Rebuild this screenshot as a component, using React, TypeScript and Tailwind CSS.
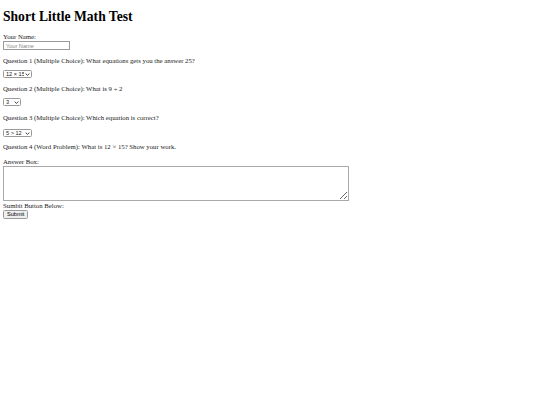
import React, { useState } from 'react';

const serif = 'font-["Liberation_Serif","Times_New_Roman",serif]';
const sans = 'font-["Liberation_Sans",Arial,sans-serif]';

function Chevron() {
  return (
    <svg viewBox="0 0 8 5" className="w-[5px] h-[3px]" fill="none" stroke="#333" strokeWidth="1.6">
      <path d="M1 1l3 3 3-3" />
    </svg>
  );
}

function TinySelect({ options, width }: { options: string[]; width: string }) {
  const [value, setValue] = useState(options[0]);
  return (
    <div className={`relative h-[8px] ${width}`}>
      <select
        value={value}
        onChange={(e) => setValue(e.target.value)}
        className={`appearance-none block w-full h-[8px] border border-[#9a9a9a] rounded-[1.5px] bg-white pl-[2px] pr-[7px] text-[5.6px] leading-[6px] text-[#222] ${sans}`}
      >
        {options.map((o) => (
          <option key={o}>{o}</option>
        ))}
      </select>
      <span className="absolute right-[2px] top-[2.5px] pointer-events-none flex">
        <Chevron />
      </span>
    </div>
  );
}

export default function App() {
  const [name, setName] = useState('');
  const [answer, setAnswer] = useState('');

  return (
    <div className={`min-h-screen bg-white text-[#222] px-[3px] text-[6.75px] ${serif}`}>
      <h1 className="text-[13.6px] text-black font-bold leading-[16px] pt-[9px] mb-[7px]">Short Little Math Test</h1>

      <div className="leading-[9px]">Your Name:</div>
      <input
        value={name}
        onChange={(e) => setName(e.target.value)}
        placeholder="Your Name"
        className={`block w-[67px] h-[9px] border border-[#9a9a9a] px-[2px] text-[5.6px] leading-[7px] placeholder:text-[#888] ${sans}`}
      />

      <p className="leading-[9px] mt-[6px]">Question 1 (Multiple Choice): What equations gets you the answer 25?</p>
      <div className="mt-[5px]">
        <TinySelect options={['12 × 15', '5 × 5', '20 + 3']} width="w-[29px]" />
      </div>

      <p className="leading-[9px] mt-[6px]">Question 2 (Multiple Choice): What is 9 ÷ 2</p>
      <div className="mt-[5px]">
        <TinySelect options={['3', '4.5', '5']} width="w-[18px]" />
      </div>

      <p className="leading-[9px] mt-[7px]">Question 3 (Multiple Choice): Which equation is correct?</p>
      <div className="mt-[7px]">
        <TinySelect options={['5 > 12', '12 > 5', '5 = 12']} width="w-[29px]" />
      </div>

      <p className="leading-[9px] mt-[5px]">Question 4 (Word Problem): What is 12 × 15? Show your work.</p>

      <div className="leading-[9px] mt-[6px]">Answer Box:</div>
      <textarea
        value={answer}
        onChange={(e) => setAnswer(e.target.value)}
        className="block w-[346px] h-[35px] border border-[#a9a9a9] text-[7px] resize-y"
      />

      <div className="leading-[9px]">Sumbit Button Below:</div>
      <button
        className={`block h-[9px] px-[3px] border border-[#9a9a9a] rounded-[1.5px] bg-[#efefef] text-[5.6px] leading-[7px] text-black ${sans}`}
      >
        Submit
      </button>
    </div>
  );
}
